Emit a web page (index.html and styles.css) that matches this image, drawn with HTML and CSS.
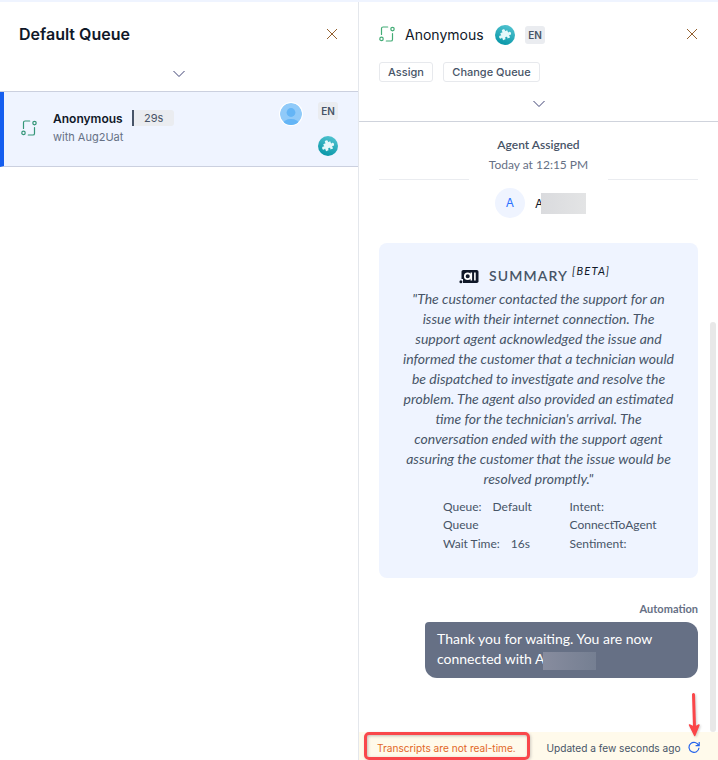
FILE: index.html
```html
<!DOCTYPE html>
<html lang="en">
<head>
<meta charset="utf-8">
<title>Default Queue</title>
<link rel="stylesheet" href="styles.css">
</head>
<body>
<svg width="0" height="0" class="defs" aria-hidden="true">
  <defs>
    <linearGradient id="teal" x1="0.7" y1="0" x2="0.3" y2="1"><stop offset="0" stop-color="#51c3d0"/><stop offset="1" stop-color="#0695a6"/></linearGradient>
    <symbol id="transfer" viewBox="0 0 16 16"><g fill="none" stroke="currentColor" stroke-width="1.2" stroke-linecap="round"><path d="M2.500 8.500V2.600Q2.500 1 4.100 1H8.700M13.500 7.500v5.900Q13.500 15 11.900 15H7.300"/><circle cx="13.500" cy="3.100" r="1.700"/><circle cx="2.500" cy="12.900" r="1.700"/></g></symbol>
    <symbol id="close" viewBox="0 0 12 12"><path d="M1 1l10 10M11 1L1 11" fill="none" stroke="currentColor" stroke-width="1"/></symbol>
    <symbol id="chevron" viewBox="0 0 12 8"><path d="M.5 1L6 6.500 11.500 1" fill="none" stroke="currentColor" stroke-width="1"/></symbol>
    <symbol id="puzzle" viewBox="0 0 20 20"><circle cx="10" cy="10" r="10" fill="url(#teal)"/><g fill="#e6f8fa" transform="rotate(-22 10 10)"><path d="M6.300 6.500h2.900c-.5-.5-.7-1-.6-1.500.3-1.400 3-1.400 3.200 0 .1.500-.1 1-.6 1.500h2.600v2.700c.5-.5 1-.7 1.500-.6 1.400.3 1.400 2.900 0 3.200-.5.100-1-.1-1.500-.6v2.900h-2.900c.5-.6.5-1.100.2-1.500-.5-.6-1.500-.6-2 0-.3.400-.3.900.2 1.500h-3v-2.900c-.5.500-1 .7-1.500.6-1.400-.3-1.400-2.900 0-3.200.5-.1 1 .1 1.500.6z"/></g></symbol>
  </defs>
</svg>
<main class="app">
  <section class="queue">
    <header class="queue-head">
      <div class="queue-title"><h1>Default Queue</h1><svg class="close"><use href="#close"/></svg></div>
      <svg class="chevron"><use href="#chevron"/></svg>
    </header>
    <article class="card">
      <svg class="transfer"><use href="#transfer"/></svg>
      <div class="who">
        <div class="line"><b class="name">Anonymous</b><span class="timer">29s</span></div>
        <div class="with">with Aug2Uat</div>
      </div>
      <svg class="avatar" viewBox="0 0 24 24"><defs><clipPath id="face"><circle cx="12" cy="12" r="11"/></clipPath></defs><circle cx="12" cy="12" r="12" fill="#fff"/><g clip-path="url(#face)"><circle cx="12" cy="12" r="11" fill="#90caf9"/><circle cx="12" cy="10.500" r="4.400" fill="#64b5f6"/><ellipse cx="12" cy="22" rx="8" ry="5" fill="#64b5f6"/></g></svg>
      <div class="tags"><span class="lang">EN</span><svg class="puzzle"><use href="#puzzle"/></svg></div>
    </article>
  </section>

  <section class="chat">
    <header class="chat-head">
      <div class="chat-title">
        <svg class="transfer bright"><use href="#transfer"/></svg>
        <h2>Anonymous</h2>
        <svg class="puzzle"><use href="#puzzle"/></svg>
        <span class="lang">EN</span>
        <svg class="close"><use href="#close"/></svg>
      </div>
      <div class="actions"><button>Assign</button><button class="change">Change Queue</button></div>
      <svg class="chevron"><use href="#chevron"/></svg>
    </header>
    <div class="body">
      <div class="messages">
        <div class="event">
          <span class="rule"></span>
          <div class="event-text"><b>Agent Assigned</b><span>Today at 12:15 PM</span></div>
          <span class="rule"></span>
        </div>
        <div class="agent"><span class="initial">A</span><span class="agent-name">A</span><span class="redact"></span></div>
        <div class="summary">
          <div class="summary-head">
            <svg class="ai" viewBox="0 0 20 15"><rect x="2.500" y="1" width="17" height="13" rx="1.800" fill="#101828"/><path d="M0 10h4v4.500H0z" fill="#eff4ff"/><circle cx="1.900" cy="12.700" r="1.500" fill="#101828"/><circle cx="8.700" cy="7.300" r="2.900" fill="none" stroke="#fff" stroke-width="1.700"/><path d="M12.300 3.500v8M15.900 3.500v8" stroke="#fff" stroke-width="1.600"/></svg>
            <h3>SUMMARY</h3><i>[BETA]</i>
          </div>
          <p>"The customer contacted the support for an<br>issue with their internet connection. The<br>support agent acknowledged the issue and<br>informed the customer that a technician would<br>be dispatched to investigate and resolve the<br>problem. The agent also provided an estimated<br>time for the technician's arrival. The<br>conversation ended with the support agent<br>assuring the customer that the issue would be<br>resolved promptly."</p>
          <div class="facts">
            <div><span class="label">Queue:</span>Default<br>Queue</div>
            <div>Intent:<br>ConnectToAgent</div>
            <div><span class="label">Wait Time:</span>16s</div>
            <div>Sentiment:</div>
          </div>
        </div>
        <div class="sender">Automation</div>
        <div class="bubble"><div>Thank you for waiting. You are now</div><div class="second">connected with A<span class="redact dark"></span></div></div>
      </div>
      <div class="track"><div class="thumb"></div></div>
    </div>
    <footer class="status">
      <span class="warning">Transcripts are not real-time.</span>
      <span class="updated">Updated a few seconds ago</span>
      <svg class="refresh" viewBox="0 0 12 12"><path d="M10.700 4.600A5 5 0 1 0 11 6.800M11.200 1v3.600H7.600" fill="none" stroke="#2563eb" stroke-width="1.200"/></svg>
      <span class="highlight"></span>
      <svg class="arrow" viewBox="0 0 20 50"><path d="M8.500 5.500l1 33" stroke="#fb4649" stroke-width="3" stroke-linecap="round"/><path d="M4.500 36l5 2.500 4.500-2.500L9.700 46.500z" fill="#fb4649" stroke="#fb4649" stroke-width="1.500" stroke-linejoin="round"/></svg>
    </footer>
  </section>
</main>
</body>
</html>
```

FILE: styles.css
```css
* { box-sizing: border-box; }
body { margin: 0; background: #fff; color: #101828; font-family: Inter, sans-serif; }
h1, h2, h3, p { margin: 0; }
svg { display: block; flex: none; }
.defs { position: absolute; }
.app { width: 718px; height: 760px; border-top: 2px solid #eff4ff; display: grid; grid-template-columns: 358px 360px; overflow: hidden; white-space: nowrap; }
.close { width: 12px; height: 12px; color: #93602f; }
.chevron { width: 12px; height: 8px; color: #3f4275; }
.transfer { width: 16px; height: 16px; color: #349678; }
.transfer.bright { color: #43ac76; }
.puzzle { width: 20px; height: 20px; }
.lang { display: block; height: 18px; border-radius: 3px; background: #eaecf0; color: #475467; font-size: 10px; line-height: 18px; font-weight: 600; width: 20px; text-align: center; }

.queue-head { height: 90px; border-bottom: 1px solid #cbd0df; }
.queue-title { height: 64px; padding: 0 20px 0 19px; display: flex; align-items: center; justify-content: space-between; }
h1 { font-size: 16px; line-height: 24px; font-weight: 600; }
.queue-head .chevron { margin: 4px auto 0 172.500px; }
.card { height: 75px; background: #eff4ff; border-left: 4px solid #155eef; border-bottom: 1px solid #cbd0df; padding: 11px 20px 0 17px; display: flex; align-items: flex-start; }
.card .transfer { margin-top: 17px; }
.who { margin: 7px 0 0 16px; width: 226px; }
.line { display: flex; align-items: center; height: 16px; }
.name { width: 69px; font-size: 12px; font-weight: 600; }
.timer { margin-left: 10px; width: 42px; height: 16px; border-left: 2px solid #475467; border-radius: 0 3px 3px 0; background: #eaecf0; color: #475467; font-size: 11px; line-height: 16px; padding-left: 10px; }
.with { margin-top: 3px; color: #667085; font-size: 11px; line-height: 16px; }
.avatar { width: 24px; height: 24px; margin-top: -1px; }
.tags { margin: -1px 0 0 auto; display: flex; flex-direction: column; gap: 16px; }

.chat { border-left: 1px solid #e4e7ec; display: flex; flex-direction: column; height: 758px; }
.chat-head { height: 120px; border-bottom: 1px solid #cfd3dc; flex: none; }
.chat-title { height: 60px; padding: 6px 20px 0; display: flex; align-items: center; }
h2 { margin-left: 10px; width: 90px; font-size: 14px; line-height: 24px; font-weight: 400; }
.chat-title .transfer { margin-top: -2px; }
.chat-title .lang { margin-left: 10px; margin-top: -1px; }
.chat-title .close { margin-left: auto; margin-top: -2px; }
.actions { display: flex; gap: 10px; padding-left: 20px; }
button { width: 54px; height: 20px; padding: 0; border: 1px solid #e7e9ed; border-radius: 3px; background: #fff; color: #475467; font: 500 11px/18px Inter, sans-serif; }
button.change { width: 97px; }
.chat-head .chevron { margin: 18px 0 0 173.500px; }
.body { flex: 1; display: flex; min-height: 0; font-family: Lato, sans-serif; }
.messages { width: 319px; margin-left: 20px; }
.event { margin-top: 13px; height: 45px; display: flex; align-items: flex-end; justify-content: space-between; }
.rule { width: 90px; height: 1px; background: #eaecf0; }
.event-text { height: 45px; font-size: 12px; line-height: 20px; color: #667085; text-align: center; }
.event-text b { display: block; color: #475467; font-weight: 600; }
.agent { display: flex; align-items: center; margin: 8px 0 0 116px; height: 30px; font-family: Inter, sans-serif; }
.initial { width: 30px; height: 30px; border-radius: 50%; background: #eff4ff; color: #2970ff; font-size: 12px; line-height: 30px; text-align: center; }
.agent-name { margin-left: 10px; width: 8px; font-size: 12px; }
.redact { width: 45px; height: 21px; margin-left: -2px; background: linear-gradient(90deg, #dadbde, #e3e4e5); position: relative; }
.summary { margin-top: 25px; height: 335px; background: #eff4ff; border-radius: 8px; padding-top: 20px; color: #475467; }
.summary-head { height: 26px; display: flex; align-items: center; padding-left: 80px; }
.ai { width: 20px; height: 15px; }
h3 { margin-left: 10px; font-size: 14px; line-height: 20px; letter-spacing: 1.120px; font-weight: 600; }
.summary-head i { margin: -10px 0 0 4px; color: #101828; font-size: 11px; letter-spacing: 1.200px; line-height: 14px; }
p { font-size: 14px; line-height: 20px; font-style: italic; text-align: center; }
.facts { display: grid; grid-template-columns: 126.500px 126px; row-gap: 1px; margin: 9px 0 0 64px; font-size: 12px; line-height: 18px; }
.label { margin-right: 11px; }
.sender { margin-top: 23px; text-align: right; color: #667085; font-size: 11px; line-height: 16px; font-weight: 700; }
.bubble { margin: 5px 0 0 46px; width: 273px; height: 56px; padding: 7px 12px; border-radius: 4px 12px 12px 12px; background: #667085; color: #fff; font-size: 14px; line-height: 20px; }
.second { display: flex; height: 20px; }
.redact.dark { width: 53px; height: 18px; margin: 3px 0 0 -2px; background: linear-gradient(90deg, #878c9e, #757f92); }
.track { margin-left: 12px; width: 6px; padding-top: 200px; }
.thumb { height: 410px; border-radius: 3px; background: #e8e8e8; }
.status { position: relative; height: 28px; flex: none; display: flex; align-items: center; padding: 3px 18px 0 18px; background: #fffaeb; font-size: 10.130px; }
.warning { color: #e26828; width: 170px; }
.updated { color: #475467; width: 142px; }
.refresh { width: 12px; height: 12px; margin-top: -1px; }
.highlight { position: absolute; left: 5px; top: 0; width: 166px; height: 28px; border: 3px solid #f9474b; border-radius: 5px; box-shadow: 1px 1px 3px #8886, inset 1px 1px 3px #8888; }
.arrow { position: absolute; left: 326px; top: -43px; width: 20px; height: 50px; filter: drop-shadow(1px 1px 1px #8886); }
```
